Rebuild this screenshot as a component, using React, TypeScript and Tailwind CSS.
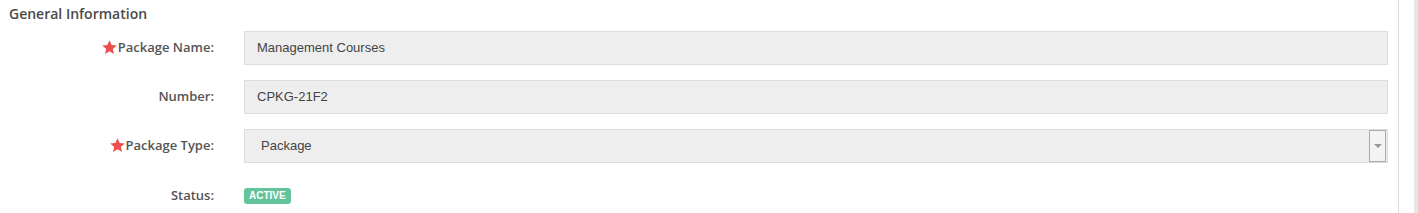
import React from 'react';

const Star = () => (
  <svg viewBox="0 0 24 24" className="w-[15px] h-[15px] mr-[1px] -mt-[1px]" fill="#ee4e4e">
    <path d="M12 0.5l3.4 7.6 8.1.7-6.2 5.4 1.9 8.1L12 17.9 4.8 22.3l1.9-8.1L.5 8.8l8.1-.7z" />
  </svg>
);

const Label = ({ text, required }: { text: string; required?: boolean }) => (
  <div className="w-[214px] flex items-center justify-end text-[13px] font-semibold text-[#555]">
    {required && <Star />}
    <span>{text}</span>
  </div>
);

export default function App() {
  return (
    <div className="flex w-[1418px] h-[213px] bg-white" style={{ fontFamily: '"Open Sans", sans-serif' }}>
      <div className="w-[1399px] border-r border-[#dcdcdc] shrink-0">
        <h2 className="pl-[9px] pt-[4px] text-[14px] font-semibold text-[#4a4a4a] leading-[20px]">General Information</h2>

        <div className="mt-[7px] flex flex-col gap-[15px]">
          <div className="flex items-center">
            <Label text="Package Name:" required />
            <div className="ml-[30px] w-[1144px] h-[34px] bg-[#eeeeee] border border-[#dddddd] flex items-center pl-[12px] text-[13px] text-[#444]" style={{ fontFamily: '"Liberation Sans", Arial, sans-serif' }}>
              Management Courses
            </div>
          </div>

          <div className="flex items-center">
            <Label text="Number:" />
            <div className="ml-[30px] w-[1144px] h-[34px] bg-[#eeeeee] border border-[#dddddd] flex items-center pl-[12px] text-[13px] text-[#444]" style={{ fontFamily: '"Liberation Sans", Arial, sans-serif' }}>
              CPKG-21F2
            </div>
          </div>

          <div className="flex items-center">
            <Label text="Package Type:" required />
            <div className="ml-[30px] w-[1144px] h-[34px] bg-[#eeeeee] border border-[#dddddd] flex items-center justify-between pl-[16px] pr-[1px] text-[13px] text-[#444]" style={{ fontFamily: '"Liberation Sans", Arial, sans-serif' }}>
              <span>Package</span>
              <div className="w-[17px] h-[32px] border border-[#aaaaaa] bg-[#f4f4f4] flex items-center justify-center">
                <div className="w-0 h-0 border-l-[4px] border-r-[4px] border-t-[4px] border-l-transparent border-r-transparent border-t-[#999]" />
              </div>
            </div>
          </div>

          <div className="flex items-center mt-[8px]">
            <Label text="Status:" />
            <div className="ml-[30px] flex">
              <span className="inline-flex items-center h-[16px] px-[5px] rounded-[3px] bg-[#62c39c] text-white text-[10px] font-bold" style={{ fontFamily: '"Liberation Sans", Arial, sans-serif' }}>
                ACTIVE
              </span>
            </div>
          </div>
        </div>
      </div>
      <div className="ml-[15px] w-[4px] bg-[#e3e9e5]" />
    </div>
  );
}
